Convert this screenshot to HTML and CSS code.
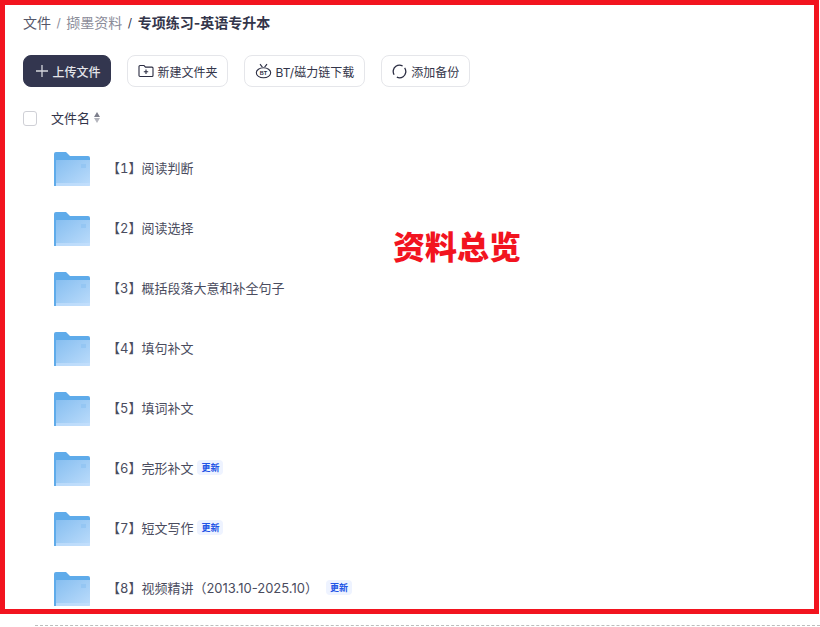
FILE: index.html
```html
<!DOCTYPE html>
<html lang="zh-CN">
<head>
  <meta charset="UTF-8" />
  <title>资料总览</title>
  <link rel="stylesheet" href="styles.css">
</head>
<body>

  <svg class="defs" width="0" height="0">
    <defs>
      <linearGradient id="folderFront" x1="0" y1="0" x2="1" y2="1">
        <stop offset="0" stop-color="#86bef0" />
        <stop offset="1" stop-color="#bcdcfb" />
      </linearGradient>
      <symbol id="folder" viewBox="0 0 36 34">
        <path d="M0 2a2 2 0 0 1 2-2h10l4 4h18a2 2 0 0 1 2 2v6H2v22H0z" fill="#5fabea" />
        <path d="M2 8h34v25a1 1 0 0 1-1 1H2z" fill="url(#folderFront)" />
        <rect x="2" y="31" width="34" height="3" fill="#c4e0fc" opacity="0.7" />
        <rect x="27" y="12" width="5" height="4" fill="#8fc3f2" opacity="0.7" />
      </symbol>
    </defs>
  </svg>

  <div class="frame">
    <!-- Breadcrumb -->
    <div class="crumbs">
      <span>文件</span>
      <span class="sep">/</span>
      <span class="muted">撷墨资料</span>
      <span class="sep dark">/</span>
      <span class="current">专项练习-英语专升本</span>
    </div>

    <!-- Toolbar -->
    <div class="toolbar">
      <button class="btn btn-primary">
        <svg width="14" height="14" viewBox="0 0 14 14"><path d="M7 1v12M1 7h12" stroke="#d5d6dc" stroke-width="1.3" /></svg>
        上传文件
      </button>
      <button class="btn">
        <svg width="16" height="14" viewBox="0 0 16 14" fill="none" stroke="#2b2d42" stroke-width="1.1"><path d="M1 2.5a1 1 0 0 1 1-1h4l1.5 1.6H14a1 1 0 0 1 1 1v7.4a1 1 0 0 1-1 1H2a1 1 0 0 1-1-1z" /><path d="M8 5.5v4.4M5.8 7.7h4.4" /></svg>
        新建文件夹
      </button>
      <button class="btn">
        <svg width="17" height="16" viewBox="0 0 17 16" fill="none" stroke="#2b2d42" stroke-width="1.1"><ellipse cx="8.5" cy="9.8" rx="7.2" ry="5" /><path d="M5 1.2l2.4 3M12 1.2L9.6 4.2" /><text x="8.5" y="12" class="bt-mark">BT</text></svg>
        BT/磁力链下载
      </button>
      <button class="btn btn-last">
        <svg width="15" height="15" viewBox="0 0 15 15" fill="none" stroke="#2b2d42" stroke-width="1.3"><circle class="ring" cx="7.5" cy="7.5" r="6.3" /></svg>
        添加备份
      </button>
    </div>

    <!-- File list -->
    <div class="list-head">
      <span class="checkbox"></span>
      <span class="head-name">文件名</span>
      <span class="sort">
        <i class="up"></i>
        <i class="down"></i>
      </span>
    </div>

    <div class="file-row">
      <svg class="folder"><use href="#folder" /></svg>
      <span class="file-name"><span class="no">【1】</span>阅读判断</span>
    </div>
    <div class="file-row">
      <svg class="folder"><use href="#folder" /></svg>
      <span class="file-name"><span class="no">【2】</span>阅读选择</span>
    </div>
    <div class="file-row">
      <svg class="folder"><use href="#folder" /></svg>
      <span class="file-name"><span class="no">【3】</span>概括段落大意和补全句子</span>
    </div>
    <div class="file-row">
      <svg class="folder"><use href="#folder" /></svg>
      <span class="file-name"><span class="no">【4】</span>填句补文</span>
    </div>
    <div class="file-row">
      <svg class="folder"><use href="#folder" /></svg>
      <span class="file-name"><span class="no">【5】</span>填词补文</span>
    </div>
    <div class="file-row">
      <svg class="folder"><use href="#folder" /></svg>
      <span class="file-name"><span class="no">【6】</span>完形补文</span>
      <span class="badge">更新</span>
    </div>
    <div class="file-row">
      <svg class="folder"><use href="#folder" /></svg>
      <span class="file-name"><span class="no">【7】</span>短文写作</span>
      <span class="badge">更新</span>
    </div>
    <div class="file-row">
      <svg class="folder"><use href="#folder" /></svg>
      <span class="file-name"><span class="no">【8】</span>视频精讲（2013.10-2025.10）</span>
      <span class="badge badge-wide">更新</span>
    </div>

    <div class="stamp">资料总览</div>
  </div>

  <div class="dashed"></div>

</body>
</html>
```

FILE: styles.css
```css
html, body {
  margin: 0;
  height: 627px;
  overflow: hidden;
}

body {
  background: white;
  font-family: "Inter", "Noto Sans CJK SC", sans-serif;
  color: #33354a;
}

.defs {
  display: block;
  height: 0;
}

.frame {
  position: relative;
  box-sizing: border-box;
  width: 819px;
  height: 614px;
  padding: 0 18px;
  border: 5px solid #f2141f;
  overflow: hidden;
}

.crumbs {
  display: flex;
  align-items: center;
  gap: 5.5px;
  height: 36px;
  font-size: 14px;
  line-height: 36px;
  color: #55576a;
}

.crumbs .muted {
  color: #8b8c99;
}

.crumbs .sep {
  font-size: 12px;
  color: #8b8c99;
}

.crumbs .sep.dark {
  color: #33354a;
}

.crumbs .current {
  font-weight: 700;
  color: #33354a;
}

.toolbar {
  display: flex;
  gap: 16px;
  margin-top: 14px;
}

.btn {
  display: flex;
  align-items: center;
  justify-content: center;
  gap: 4px;
  box-sizing: border-box;
  height: 32px;
  padding: 0 9.5px;
  border: 1px solid #e5e6ea;
  border-radius: 8px;
  background: white;
  font-family: inherit;
  font-size: 12px;
  color: #33354a;
}

.btn-primary {
  padding: 0 9.5px 0 10.5px;
  border-color: #33364f;
  background: #33364f;
  font-weight: 500;
  color: #e4e5ea;
}

.btn-last {
  padding: 0 10px 0 10.5px;
}

.ring {
  stroke-dasharray: 16 3.8;
  transform: rotate(-35deg);
  transform-origin: center;
}

.bt-mark {
  font-family: "Liberation Sans", sans-serif;
  font-size: 5.5px;
  font-weight: 700;
  text-anchor: middle;
  fill: #2b2d42;
  stroke: none;
}

.list-head {
  display: flex;
  align-items: center;
  height: 30px;
  margin-top: 15px;
  margin-bottom: 7px;
}

.checkbox {
  box-sizing: border-box;
  width: 14px;
  height: 15px;
  margin-top: 2px;
  border: 1px solid #cfd0d6;
  border-radius: 3px;
}

.head-name {
  margin-left: 14px;
  font-size: 13px;
  color: #33354a;
}

.sort {
  display: flex;
  flex-direction: column;
  gap: 1px;
  margin-left: 4px;
}

.sort i {
  width: 0;
  height: 0;
  border-left: 3.5px solid transparent;
  border-right: 3.5px solid transparent;
}

.sort .up {
  border-bottom: 5px solid #7d7f8c;
}

.sort .down {
  border-top: 5px solid #b4b5bd;
}

.file-row {
  display: flex;
  align-items: center;
  height: 60px;
  padding-left: 31px;
}

.folder {
  flex: none;
  width: 36px;
  height: 34px;
  margin-right: 17px;
}

.file-name {
  padding-bottom: 4px;
  font-size: 13px;
  color: #4a4c5e;
}

.file-name .no {
  font-variant-numeric: tabular-nums;
}

.badge {
  margin-left: 4px;
  margin-bottom: 3px;
  padding: 0 4px;
  border-radius: 4px;
  background: #eef3ff;
  font-size: 9px;
  font-weight: 700;
  line-height: 15px;
  color: #1f55e6;
}

.badge-wide {
  margin-left: 8px;
}

.stamp {
  position: absolute;
  left: 388px;
  top: 221px;
  font-size: 32px;
  font-weight: 900;
  line-height: 44px;
  color: #f2141f;
}

.dashed {
  margin: 11px 0 0 35px;
  border-top: 1px dashed #bdbdbd;
}
```
